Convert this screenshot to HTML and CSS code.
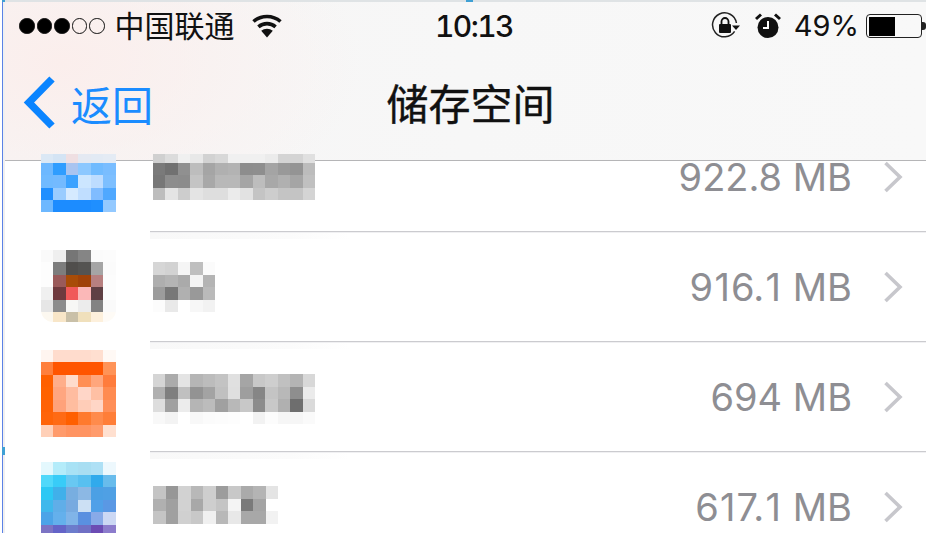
FILE: index.html
```html
<!DOCTYPE html>
<html lang="zh-CN">
<head>
<meta charset="utf-8">
<title>储存空间</title>
<link rel="stylesheet" href="styles.css">
</head>
<body>
<div class="screen">
  <span class="edge"></span>
  <span class="handle handle-tl"></span>
  <span class="handle handle-tc"></span>
  <span class="handle handle-ml"></span>
  <header class="header">
    <div class="status">
      <div class="status-left">
        <div class="signal"><i class="dot on"></i><i class="dot on"></i><i class="dot on"></i><i class="dot"></i><i class="dot"></i></div>
        <span class="carrier">中国联通</span>
        <svg class="wifi" viewBox="0 0 30 24"><path d="M15 23.500 9.200 16.800a9 9 0 0 1 11.600 0Z" fill="#111"/><path d="M6.400 12.800a13.200 13.200 0 0 1 17.200 0" fill="none" stroke="#111" stroke-width="3.600"/><path d="M1.500 7.500a20.500 20.500 0 0 1 27 0" fill="none" stroke="#111" stroke-width="3.600"/></svg>
      </div>
      <span class="time">10:13</span>
      <div class="status-right">
        <svg class="lock" viewBox="0 0 30 28"><path d="M23.600 19.400A12 12 0 1 1 25.400 11" fill="none" stroke="#222" stroke-width="1.500"/><path d="M21 13.500h8l-4 4.500Z" fill="#111"/><rect x="8" y="12" width="12" height="9" rx="1" fill="#111"/><path d="M10.500 12V9.500a3.500 3.500 0 0 1 7 0V12" fill="none" stroke="#111" stroke-width="1.800"/></svg>
        <svg class="alarm" viewBox="0 0 26 26"><circle cx="13" cy="14.500" r="10.500" fill="#111"/><path d="M13 8v7H8" fill="none" stroke="#fff" stroke-width="2"/><path d="M1 6 6 1.500M25 6 20 1.500" stroke="#111" stroke-width="3"/></svg>
        <span class="percent">49%</span>
        <div class="battery"><div class="level"></div></div>
        <span class="nub"></span>
      </div>
    </div>
    <nav class="nav">
      <a class="back">
        <svg class="chevron" viewBox="0 0 34 54"><path d="M30 3 7 26.500 30 50" fill="none" stroke="#0a84ff" stroke-width="7.500"/></svg>
        <span>返回</span>
      </a>
      <h1 class="title">储存空间</h1>
    </nav>
  </header>
  <main class="list">
    <section class="row row-first">
      <svg class="icon icon-first" viewBox="0 -0.68 6 4.68" preserveAspectRatio="none" shape-rendering="crispEdges">
        <rect x="0" y="-0.68" width="1" height="0.68" fill="#dbe8f5"/><rect x="1" y="-0.68" width="1" height="0.68" fill="#d4e4f4"/><rect x="2" y="-0.68" width="1" height="0.68" fill="#efdfe2"/><rect x="3" y="-0.68" width="1" height="0.68" fill="#e4e9f2"/><rect x="4" y="-0.68" width="1" height="0.68" fill="#e2eaf4"/><rect x="5" y="-0.68" width="1" height="0.68" fill="#e4ebf4"/>
        <rect x="0" y="0" width="1" height="1" fill="#6db8ff"/><rect x="1" y="0" width="1" height="1" fill="#2f9dff"/><rect x="2" y="0" width="1" height="1" fill="#a9c4f0"/><rect x="3" y="0" width="1" height="1" fill="#8cc8ff"/><rect x="4" y="0" width="1" height="1" fill="#70bbff"/><rect x="5" y="0" width="1" height="1" fill="#79bdff"/>
        <rect x="0" y="1" width="1" height="1" fill="#70baff"/><rect x="1" y="1" width="1" height="1" fill="#73baff"/><rect x="2" y="1" width="1" height="1" fill="#3ba2ff"/><rect x="3" y="1" width="1" height="1" fill="#cce6ff"/><rect x="4" y="1" width="1" height="1" fill="#bddcff"/><rect x="5" y="1" width="1" height="1" fill="#7dbfff"/>
        <rect x="0" y="2" width="1" height="1" fill="#1f8fff"/><rect x="1" y="2" width="1" height="1" fill="#99ccff"/><rect x="2" y="2" width="1" height="1" fill="#d5eaff"/><rect x="3" y="2" width="1" height="1" fill="#c0deff"/><rect x="4" y="2" width="1" height="1" fill="#80bcff"/><rect x="5" y="2" width="1" height="1" fill="#4fa8ff"/>
        <rect x="0" y="3" width="1" height="1" fill="#6db8ff"/><rect x="1" y="3" width="1" height="1" fill="#1c8cff"/><rect x="2" y="3" width="1" height="1" fill="#1c8cff"/><rect x="3" y="3" width="1" height="1" fill="#1c8cff"/><rect x="4" y="3" width="1" height="1" fill="#1f8fff"/><rect x="5" y="3" width="1" height="1" fill="#93c9ff"/>
      </svg>
      <svg class="name name-first" viewBox="0 0.32 13 3.68" preserveAspectRatio="none" shape-rendering="crispEdges">
        <rect x="0" y="0" width="1" height="1" fill="#d0d0d0"/><rect x="1" y="0" width="1" height="1" fill="#dcdcdc"/><rect x="2" y="0" width="1" height="1" fill="#f0f0f0"/><rect x="3" y="0" width="1" height="1" fill="#e8e8e8"/><rect x="4" y="0" width="1" height="1" fill="#d2d2d2"/><rect x="5" y="0" width="1" height="1" fill="#d8d8d8"/><rect x="6" y="0" width="1" height="1" fill="#f0f0f0"/><rect x="7" y="0" width="1" height="1" fill="#f0f0f0"/><rect x="8" y="0" width="1" height="1" fill="#f0f0f0"/><rect x="9" y="0" width="1" height="1" fill="#ebebeb"/><rect x="10" y="0" width="1" height="1" fill="#d4d4d4"/><rect x="11" y="0" width="1" height="1" fill="#d4d4d4"/><rect x="12" y="0" width="1" height="1" fill="#e0e0e0"/>
        <rect x="0" y="1" width="1" height="1" fill="#7a7a7a"/><rect x="1" y="1" width="1" height="1" fill="#717171"/><rect x="2" y="1" width="1" height="1" fill="#909090"/><rect x="3" y="1" width="1" height="1" fill="#bdbdbd"/><rect x="4" y="1" width="1" height="1" fill="#a5a5a5"/><rect x="5" y="1" width="1" height="1" fill="#b0b0b0"/><rect x="6" y="1" width="1" height="1" fill="#b3b3b3"/><rect x="7" y="1" width="1" height="1" fill="#8d8d8d"/><rect x="8" y="1" width="1" height="1" fill="#8e8e8e"/><rect x="9" y="1" width="1" height="1" fill="#a4a4a4"/><rect x="10" y="1" width="1" height="1" fill="#999999"/><rect x="11" y="1" width="1" height="1" fill="#949494"/><rect x="12" y="1" width="1" height="1" fill="#bcbcbc"/>
        <rect x="0" y="2" width="1" height="1" fill="#777777"/><rect x="1" y="2" width="1" height="1" fill="#8d8d8d"/><rect x="2" y="2" width="1" height="1" fill="#8c8c8c"/><rect x="3" y="2" width="1" height="1" fill="#c4c4c4"/><rect x="4" y="2" width="1" height="1" fill="#a8a8a8"/><rect x="5" y="2" width="1" height="1" fill="#b8b8b8"/><rect x="6" y="2" width="1" height="1" fill="#b8b8b8"/><rect x="7" y="2" width="1" height="1" fill="#a5a5a5"/><rect x="8" y="2" width="1" height="1" fill="#bdbdbd"/><rect x="9" y="2" width="1" height="1" fill="#a8a8a8"/><rect x="10" y="2" width="1" height="1" fill="#b0b0b0"/><rect x="11" y="2" width="1" height="1" fill="#a5a5a5"/><rect x="12" y="2" width="1" height="1" fill="#c0c0c0"/>
        <rect x="0" y="3" width="1" height="1" fill="#bdbdbd"/><rect x="1" y="3" width="1" height="1" fill="#e4e4e4"/><rect x="2" y="3" width="1" height="1" fill="#cdcdcd"/><rect x="3" y="3" width="1" height="1" fill="#e4e4e4"/><rect x="4" y="3" width="1" height="1" fill="#dedede"/><rect x="5" y="3" width="1" height="1" fill="#dedede"/><rect x="6" y="3" width="1" height="1" fill="#ebebeb"/><rect x="7" y="3" width="1" height="1" fill="#e2e2e2"/><rect x="8" y="3" width="1" height="1" fill="#c4c4c4"/><rect x="9" y="3" width="1" height="1" fill="#cdcdcd"/><rect x="10" y="3" width="1" height="1" fill="#c4c4c4"/><rect x="11" y="3" width="1" height="1" fill="#c4c4c4"/><rect x="12" y="3" width="1" height="1" fill="#d4d4d4"/>
      </svg>
      <span class="size">922.8 MB</span>
      <svg class="more" viewBox="0 0 20 32"><path d="M2.500 2 17 16 2.500 30" fill="none" stroke="#c7c7cc" stroke-width="3.600"/></svg>
    </section>
    <section class="row">
      <svg class="icon icon-qq" viewBox="0 0 6 5.76" preserveAspectRatio="none" shape-rendering="crispEdges">
        <rect x="0" y="0" width="1" height="1" fill="#fafafa"/><rect x="1" y="0" width="1" height="1" fill="#efefef"/><rect x="2" y="0" width="1" height="1" fill="#767676"/><rect x="3" y="0" width="1" height="1" fill="#858585"/><rect x="4" y="0" width="1" height="1" fill="#fbfbfb"/><rect x="5" y="0" width="1" height="1" fill="#fcfcfc"/>
        <rect x="0" y="1" width="1" height="1" fill="#fdfdfd"/><rect x="1" y="1" width="1" height="1" fill="#7d7d7d"/><rect x="2" y="1" width="1" height="1" fill="#504e4c"/><rect x="3" y="1" width="1" height="1" fill="#545351"/><rect x="4" y="1" width="1" height="1" fill="#a5a5a5"/><rect x="5" y="1" width="1" height="1" fill="#fbfbfb"/>
        <rect x="0" y="2" width="1" height="1" fill="#fdfdfd"/><rect x="1" y="2" width="1" height="1" fill="#9a5a5a"/><rect x="2" y="2" width="1" height="1" fill="#a84c08"/><rect x="3" y="2" width="1" height="1" fill="#a04208"/><rect x="4" y="2" width="1" height="1" fill="#b78080"/><rect x="5" y="2" width="1" height="1" fill="#fcfcfc"/>
        <rect x="0" y="3" width="1" height="1" fill="#f0f0f0"/><rect x="1" y="3" width="1" height="1" fill="#6e3a3e"/><rect x="2" y="3" width="1" height="1" fill="#f05a5a"/><rect x="3" y="3" width="1" height="1" fill="#fbb8b8"/><rect x="4" y="3" width="1" height="1" fill="#5f4044"/><rect x="5" y="3" width="1" height="1" fill="#fcfcfc"/>
        <rect x="0" y="4" width="1" height="1" fill="#e6e6e6"/><rect x="1" y="4" width="1" height="1" fill="#8c8c8c"/><rect x="2" y="4" width="1" height="1" fill="#f7f7f5"/><rect x="3" y="4" width="1" height="1" fill="#ececec"/><rect x="4" y="4" width="1" height="1" fill="#838383"/><rect x="5" y="4" width="1" height="1" fill="#fafafa"/>
        <rect x="0" y="5" width="1" height="1" fill="#fcf8f0"/><rect x="1" y="5" width="1" height="1" fill="#f8e6c8"/><rect x="2" y="5" width="1" height="1" fill="#c9c0a8"/><rect x="3" y="5" width="1" height="1" fill="#f0e0bc"/><rect x="4" y="5" width="1" height="1" fill="#fdf0dc"/><rect x="5" y="5" width="1" height="1" fill="#fefbf6"/>
      </svg>
      <svg class="name name-short" viewBox="0 0 5 4" preserveAspectRatio="none" shape-rendering="crispEdges">
        <rect x="0" y="0" width="1" height="1" fill="#d6d6d6"/><rect x="1" y="0" width="1" height="1" fill="#d2d2d2"/><rect x="2" y="0" width="1" height="1" fill="#f5f5f5"/><rect x="3" y="0" width="1" height="1" fill="#bfbfbf"/><rect x="4" y="0" width="1" height="1" fill="#fbfbfb"/>
        <rect x="0" y="1" width="1" height="1" fill="#aeaeae"/><rect x="1" y="1" width="1" height="1" fill="#b4b4b4"/><rect x="2" y="1" width="1" height="1" fill="#aaaaaa"/><rect x="3" y="1" width="1" height="1" fill="#f4f4f4"/><rect x="4" y="1" width="1" height="1" fill="#b4b4b4"/>
        <rect x="0" y="2" width="1" height="1" fill="#9c9c9c"/><rect x="1" y="2" width="1" height="1" fill="#787878"/><rect x="2" y="2" width="1" height="1" fill="#b0b0b0"/><rect x="3" y="2" width="1" height="1" fill="#999999"/><rect x="4" y="2" width="1" height="1" fill="#bababa"/>
        <rect x="0" y="3" width="1" height="1" fill="#fcfcfc"/><rect x="1" y="3" width="1" height="1" fill="#e9e9e9"/><rect x="2" y="3" width="1" height="1" fill="#ffffff"/><rect x="3" y="3" width="1" height="1" fill="#f7f7f7"/><rect x="4" y="3" width="1" height="1" fill="#f2f2f2"/>
      </svg>
      <span class="size">9<span class="one">1</span>6.<span class="one">1</span> MB</span>
      <svg class="more" viewBox="0 0 20 32"><path d="M2.500 2 17 16 2.500 30" fill="none" stroke="#c7c7cc" stroke-width="3.600"/></svg>
    </section>
    <section class="row">
      <svg class="icon icon-orange" viewBox="0 0 6 7" preserveAspectRatio="none" shape-rendering="crispEdges">
        <rect x="0" y="0" width="1" height="1" fill="#fff5f0"/><rect x="1" y="0" width="1" height="1" fill="#ffdccd"/><rect x="2" y="0" width="1" height="1" fill="#ffdccd"/><rect x="3" y="0" width="1" height="1" fill="#ffdccd"/><rect x="4" y="0" width="1" height="1" fill="#ffdfd0"/><rect x="5" y="0" width="1" height="1" fill="#fff9f5"/>
        <rect x="0" y="1" width="1" height="1" fill="#ff7f3c"/><rect x="1" y="1" width="1" height="1" fill="#ff5500"/><rect x="2" y="1" width="1" height="1" fill="#ff5500"/><rect x="3" y="1" width="1" height="1" fill="#ff5500"/><rect x="4" y="1" width="1" height="1" fill="#ff5500"/><rect x="5" y="1" width="1" height="1" fill="#ff9357"/>
        <rect x="0" y="2" width="1" height="1" fill="#ff6000"/><rect x="1" y="2" width="1" height="1" fill="#ffae8a"/><rect x="2" y="2" width="1" height="1" fill="#ffdccc"/><rect x="3" y="2" width="1" height="1" fill="#ff8f55"/><rect x="4" y="2" width="1" height="1" fill="#ffa67c"/><rect x="5" y="2" width="1" height="1" fill="#ff7c3c"/>
        <rect x="0" y="3" width="1" height="1" fill="#ff6200"/><rect x="1" y="3" width="1" height="1" fill="#ffa680"/><rect x="2" y="3" width="1" height="1" fill="#ffbca0"/><rect x="3" y="3" width="1" height="1" fill="#ffd6c8"/><rect x="4" y="3" width="1" height="1" fill="#ffc0a4"/><rect x="5" y="3" width="1" height="1" fill="#ff8b50"/>
        <rect x="0" y="4" width="1" height="1" fill="#ff6206"/><rect x="1" y="4" width="1" height="1" fill="#ffa27a"/><rect x="2" y="4" width="1" height="1" fill="#ffbd9f"/><rect x="3" y="4" width="1" height="1" fill="#ffcdb8"/><rect x="4" y="4" width="1" height="1" fill="#ffd6c6"/><rect x="5" y="4" width="1" height="1" fill="#ff8f58"/>
        <rect x="0" y="5" width="1" height="1" fill="#ff6409"/><rect x="1" y="5" width="1" height="1" fill="#ff6a14"/><rect x="2" y="5" width="1" height="1" fill="#ff5f00"/><rect x="3" y="5" width="1" height="1" fill="#ff7a2e"/><rect x="4" y="5" width="1" height="1" fill="#ff8b4c"/><rect x="5" y="5" width="1" height="1" fill="#ff7e38"/>
        <rect x="0" y="6" width="1" height="1" fill="#ffd0b8"/><rect x="1" y="6" width="1" height="1" fill="#ff9b6c"/><rect x="2" y="6" width="1" height="1" fill="#ff9462"/><rect x="3" y="6" width="1" height="1" fill="#ff9462"/><rect x="4" y="6" width="1" height="1" fill="#ff9b6c"/><rect x="5" y="6" width="1" height="1" fill="#ffe0d0"/>
      </svg>
      <svg class="name name-long" viewBox="0 0 13 4" preserveAspectRatio="none" shape-rendering="crispEdges">
        <rect x="0" y="0" width="1" height="1" fill="#d5d5d5"/><rect x="1" y="0" width="1" height="1" fill="#ababab"/><rect x="2" y="0" width="1" height="1" fill="#e4e4e4"/><rect x="3" y="0" width="1" height="1" fill="#b5b5b5"/><rect x="4" y="0" width="1" height="1" fill="#bcbcbc"/><rect x="5" y="0" width="1" height="1" fill="#c3c3c3"/><rect x="6" y="0" width="1" height="1" fill="#e0e0e0"/><rect x="7" y="0" width="1" height="1" fill="#a5a5a5"/><rect x="8" y="0" width="1" height="1" fill="#c8c8c8"/><rect x="9" y="0" width="1" height="1" fill="#cecece"/><rect x="10" y="0" width="1" height="1" fill="#c0c0c0"/><rect x="11" y="0" width="1" height="1" fill="#b4b4b4"/><rect x="12" y="0" width="1" height="1" fill="#d8d8d8"/>
        <rect x="0" y="1" width="1" height="1" fill="#b0b0b0"/><rect x="1" y="1" width="1" height="1" fill="#7f7f7f"/><rect x="2" y="1" width="1" height="1" fill="#c0c0c0"/><rect x="3" y="1" width="1" height="1" fill="#939393"/><rect x="4" y="1" width="1" height="1" fill="#a3a3a3"/><rect x="5" y="1" width="1" height="1" fill="#c0c0c0"/><rect x="6" y="1" width="1" height="1" fill="#dfdfdf"/><rect x="7" y="1" width="1" height="1" fill="#9e9e9e"/><rect x="8" y="1" width="1" height="1" fill="#868686"/><rect x="9" y="1" width="1" height="1" fill="#c4c4c4"/><rect x="10" y="1" width="1" height="1" fill="#b8b8b8"/><rect x="11" y="1" width="1" height="1" fill="#8e8e8e"/><rect x="12" y="1" width="1" height="1" fill="#ebebeb"/>
        <rect x="0" y="2" width="1" height="1" fill="#dddddd"/><rect x="1" y="2" width="1" height="1" fill="#a0a0a0"/><rect x="2" y="2" width="1" height="1" fill="#ececec"/><rect x="3" y="2" width="1" height="1" fill="#b5b5b5"/><rect x="4" y="2" width="1" height="1" fill="#bcbcbc"/><rect x="5" y="2" width="1" height="1" fill="#a0a0a0"/><rect x="6" y="2" width="1" height="1" fill="#b8b8b8"/><rect x="7" y="2" width="1" height="1" fill="#c8c8c8"/><rect x="8" y="2" width="1" height="1" fill="#8c8c8c"/><rect x="9" y="2" width="1" height="1" fill="#c8c8c8"/><rect x="10" y="2" width="1" height="1" fill="#b0b0b0"/><rect x="11" y="2" width="1" height="1" fill="#6e6e6e"/><rect x="12" y="2" width="1" height="1" fill="#dadada"/>
        <rect x="0" y="3" width="1" height="1" fill="#f8f8f8"/><rect x="1" y="3" width="1" height="1" fill="#f3f3f3"/><rect x="2" y="3" width="1" height="1" fill="#ffffff"/><rect x="3" y="3" width="1" height="1" fill="#f8f8f8"/><rect x="4" y="3" width="1" height="1" fill="#fbfbfb"/><rect x="5" y="3" width="1" height="1" fill="#fcfcfc"/><rect x="6" y="3" width="1" height="1" fill="#fdfdfd"/><rect x="7" y="3" width="1" height="1" fill="#ffffff"/><rect x="8" y="3" width="1" height="1" fill="#f2f2f2"/><rect x="9" y="3" width="1" height="1" fill="#fcfcfc"/><rect x="10" y="3" width="1" height="1" fill="#f6f6f6"/><rect x="11" y="3" width="1" height="1" fill="#f6f6f6"/><rect x="12" y="3" width="1" height="1" fill="#fafafa"/>
      </svg>
      <span class="size">694 MB</span>
      <svg class="more" viewBox="0 0 20 32"><path d="M2.500 2 17 16 2.500 30" fill="none" stroke="#c7c7cc" stroke-width="3.600"/></svg>
    </section>
    <section class="row row-last">
      <svg class="icon icon-blue" viewBox="0 0 6 6" preserveAspectRatio="none" shape-rendering="crispEdges">
        <rect x="0" y="0" width="1" height="1" fill="#e4f8fd"/><rect x="1" y="0" width="1" height="1" fill="#b4ecfa"/><rect x="2" y="0" width="1" height="1" fill="#a8e2f5"/><rect x="3" y="0" width="1" height="1" fill="#a8def2"/><rect x="4" y="0" width="1" height="1" fill="#aee0f5"/><rect x="5" y="0" width="1" height="1" fill="#edf8fd"/>
        <rect x="0" y="1" width="1" height="1" fill="#50d8fa"/><rect x="1" y="1" width="1" height="1" fill="#38ccf8"/><rect x="2" y="1" width="1" height="1" fill="#68c8f2"/><rect x="3" y="1" width="1" height="1" fill="#58c0f0"/><rect x="4" y="1" width="1" height="1" fill="#30aaec"/><rect x="5" y="1" width="1" height="1" fill="#68bcec"/>
        <rect x="0" y="2" width="1" height="1" fill="#2cc8f4"/><rect x="1" y="2" width="1" height="1" fill="#40b0ea"/><rect x="2" y="2" width="1" height="1" fill="#78aee0"/><rect x="3" y="2" width="1" height="1" fill="#8cb8e4"/><rect x="4" y="2" width="1" height="1" fill="#4ca0e4"/><rect x="5" y="2" width="1" height="1" fill="#4fa0e4"/>
        <rect x="0" y="3" width="1" height="1" fill="#40b8ec"/><rect x="1" y="3" width="1" height="1" fill="#60aee8"/><rect x="2" y="3" width="1" height="1" fill="#78aae0"/><rect x="3" y="3" width="1" height="1" fill="#cce0f4"/><rect x="4" y="3" width="1" height="1" fill="#50a0e8"/><rect x="5" y="3" width="1" height="1" fill="#5a98e4"/>
        <rect x="0" y="4" width="1" height="1" fill="#4ca4e8"/><rect x="1" y="4" width="1" height="1" fill="#64b0ec"/><rect x="2" y="4" width="1" height="1" fill="#80b4e8"/><rect x="3" y="4" width="1" height="1" fill="#5a90e0"/><rect x="4" y="4" width="1" height="1" fill="#88aae8"/><rect x="5" y="4" width="1" height="1" fill="#ccd8f4"/>
        <rect x="0" y="5" width="1" height="1" fill="#7c74c4"/><rect x="1" y="5" width="1" height="1" fill="#6464c8"/><rect x="2" y="5" width="1" height="1" fill="#6c7ccc"/><rect x="3" y="5" width="1" height="1" fill="#7070c4"/><rect x="4" y="5" width="1" height="1" fill="#6c4cb4"/><rect x="5" y="5" width="1" height="1" fill="#8c7ccc"/>
      </svg>
      <svg class="name name-mid" viewBox="0 0 10 3" preserveAspectRatio="none" shape-rendering="crispEdges">
        <rect x="0" y="0" width="1" height="1" fill="#c4c4c4"/><rect x="1" y="0" width="1" height="1" fill="#979797"/><rect x="2" y="0" width="1" height="1" fill="#d2d2d2"/><rect x="3" y="0" width="1" height="1" fill="#b8b8b8"/><rect x="4" y="0" width="1" height="1" fill="#cecece"/><rect x="5" y="0" width="1" height="1" fill="#9c9c9c"/><rect x="6" y="0" width="1" height="1" fill="#c8c8c8"/><rect x="7" y="0" width="1" height="1" fill="#aaaaaa"/><rect x="8" y="0" width="1" height="1" fill="#b4b4b4"/><rect x="9" y="0" width="1" height="1" fill="#e4e4e4"/>
        <rect x="0" y="1" width="1" height="1" fill="#b0b0b0"/><rect x="1" y="1" width="1" height="1" fill="#a0a0a0"/><rect x="2" y="1" width="1" height="1" fill="#d2d2d2"/><rect x="3" y="1" width="1" height="1" fill="#a8a8a8"/><rect x="4" y="1" width="1" height="1" fill="#cecece"/><rect x="5" y="1" width="1" height="1" fill="#c4c4c4"/><rect x="6" y="1" width="1" height="1" fill="#f4f4f4"/><rect x="7" y="1" width="1" height="1" fill="#7a7a7a"/><rect x="8" y="1" width="1" height="1" fill="#a4a4a4"/><rect x="9" y="1" width="1" height="1" fill="#ffffff"/>
        <rect x="0" y="2" width="1" height="1" fill="#c4c4c4"/><rect x="1" y="2" width="1" height="1" fill="#a0a0a0"/><rect x="2" y="2" width="1" height="1" fill="#d0d0d0"/><rect x="3" y="2" width="1" height="1" fill="#c8c8c8"/><rect x="4" y="2" width="1" height="1" fill="#f0f0f0"/><rect x="5" y="2" width="1" height="1" fill="#b8b8b8"/><rect x="6" y="2" width="1" height="1" fill="#e8e8e8"/><rect x="7" y="2" width="1" height="1" fill="#a8a8a8"/><rect x="8" y="2" width="1" height="1" fill="#a8a8a8"/><rect x="9" y="2" width="1" height="1" fill="#f2f2f2"/>
      </svg>
      <span class="size">6<span class="one">1</span>7.<span class="one">1</span> MB</span>
      <svg class="more" viewBox="0 0 20 32"><path d="M2.500 2 17 16 2.500 30" fill="none" stroke="#c7c7cc" stroke-width="3.600"/></svg>
    </section>
  </main>
</div>
</body>
</html>
```
FILE: styles.css
```css
* { box-sizing: border-box; margin: 0; padding: 0; }
html, body { width: 926px; height: 533px; overflow: hidden; background: #fff; }
body { font-family: "Noto Sans CJK SC", "Liberation Sans", sans-serif; }
.screen { position: relative; width: 926px; height: 533px; display: flex; flex-direction: column; overflow: hidden; border-left: 2px solid #fff; }
.edge { position: absolute; z-index: 4; left: -1px; top: 0; bottom: 0; width: 2px; background: #5b82e6; box-shadow: 2px 0 0 #f0f0f0; }
.handle { position: absolute; z-index: 5; background: #3fa0d4; }
.handle-tl { left: -2px; top: 0; width: 5px; height: 2px; }
.handle-tc { left: 464px; top: 0; width: 7px; height: 2px; }
.handle-ml { left: -2px; top: 447px; width: 5px; height: 8px; }

.header { height: 161px; flex: none; display: flex; flex-direction: column; border-top: 2px solid #dfe3e5; border-bottom: 1px solid #b5b5b7;
  background: radial-gradient(ellipse 300px 170px at 60px 60px, #fbeeec 0%, rgba(251,238,236,0) 100%), linear-gradient(90deg, #f6f5f5, #f7f7f7 50%, #f8f8f8); }
.status { height: 48px; display: flex; align-items: center; justify-content: space-between; position: relative; color: #111; }
.status-left { display: flex; align-items: center; padding-left: 17px; }
.signal { display: flex; gap: 2px; }
.dot { width: 15.500px; height: 15.500px; border-radius: 50%; border: 1.500px solid #111; display: block; }
.dot.on { background: #000; }
.carrier { font-size: 30px; margin-left: 10px; line-height: 44px; margin-top: -4px; }
.wifi { width: 30px; height: 24px; margin-left: 17px; }
.time { position: absolute; left: 433px; font: 500 30px/44px Inter, sans-serif; font-variant-numeric: tabular-nums; letter-spacing: -1.6px; }
.status-right { display: flex; align-items: center; }
.lock { width: 30px; height: 28px; }
.alarm { width: 26px; height: 26px; margin-left: 14px; }
.percent { font: 400 29px/44px Inter, sans-serif; margin-left: 13px; }
.battery { width: 56px; height: 24px; border: 1.500px solid #222; border-radius: 4px; margin-left: 7px; padding: 1.500px; }
.level { width: 26px; height: 100%; background: #000; }
.nub { width: 4px; height: 8px; background: #222; border-radius: 0 3px 3px 0; }

.nav { flex: 1; display: flex; align-items: center; justify-content: center; position: relative; }
.back { position: absolute; left: 20px; top: 0; bottom: 4px; display: flex; align-items: center; color: #1a8cff; font-size: 41px; gap: 15px; }
.chevron { width: 34px; height: 54px; }
.title { font-size: 42px; font-weight: 400; -webkit-text-stroke: .4px #111; color: #111; line-height: 56px; margin-left: 13px; margin-bottom: 6px; }

.list { flex: 1; position: relative; z-index: 1; display: flex; flex-direction: column; margin-top: -39px; }
.row { height: 110px; flex: none; display: flex; align-items: center; position: relative; padding-left: 39px; padding-right: 23px; }
.row::after { content: ""; position: absolute; left: 148px; right: 0; bottom: 0; height: 1px; background: #cbcbcf; box-shadow: 0 1px 0 #f0f0f2; }
.row::before { content: ""; position: absolute; left: 148px; width: 200px; bottom: -7px; height: 6px; background: linear-gradient(90deg, #f8f8f8, #fbfbfb 70%, #fff); }
.row-first .icon { align-self: flex-end; margin-bottom: 20px; }
.row-first .name { align-self: flex-end; margin-bottom: 32px; }
.row-last::after, .row-last::before { display: none; }
.icon { width: 74.500px; flex: none; filter: blur(.5px); }
.icon-first { height: 58.500px; }
.icon-qq { height: 72px; margin-top: -2px; border-radius: 0 0 12px 12px; }
.icon-orange { height: 87px; margin-top: -7px; }
.icon-blue { height: 75px; margin-top: -16px; }
.name { flex: none; margin-left: 37.500px; filter: blur(.5px); }
.name-first { width: 162px; height: 46px; }
.name-short { width: 62px; height: 50px; }
.name-long { width: 162px; height: 50px; margin-top: 4px; }
.name-mid { width: 125px; height: 38px; margin-bottom: 4px; }
.size { margin-left: auto; font: 400 38px/44px Inter, sans-serif; color: #8e8e93; }
.one { margin: 0 1.200px; }
.more { width: 20px; height: 32px; margin-left: 31px; flex: none; }
```
